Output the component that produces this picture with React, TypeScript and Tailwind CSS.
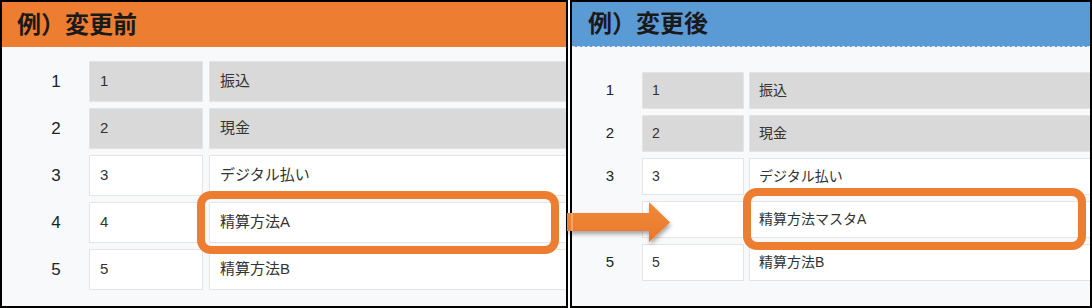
import React from 'react';

type Row = { no: number; code: string; name: string; disabled?: boolean };

const before: Row[] = [
  { no: 1, code: '1', name: '振込', disabled: true },
  { no: 2, code: '2', name: '現金', disabled: true },
  { no: 3, code: '3', name: 'デジタル払い' },
  { no: 4, code: '4', name: '精算方法A' },
  { no: 5, code: '5', name: '精算方法B' },
];

const after: Row[] = [
  { no: 1, code: '1', name: '振込', disabled: true },
  { no: 2, code: '2', name: '現金', disabled: true },
  { no: 3, code: '3', name: 'デジタル払い' },
  { no: 4, code: '4', name: '精算方法マスタA' },
  { no: 5, code: '5', name: '精算方法B' },
];

const font = { fontFamily: '"Liberation Sans", "Noto Sans CJK JP", sans-serif' };

const Cell: React.FC<{ text: string; disabled?: boolean; className: string }> = ({ text, disabled, className }) => (
  <div
    className={`flex shrink-0 items-center border text-[#333] ${
      disabled ? 'bg-[#d9d9d9] border-[#e4e4e4]' : 'bg-white border-[#e4e4e4]'
    } ${className}`}
  >
    {text}
  </div>
);

const Arrow: React.FC = () => (
  <svg width="110" height="52" viewBox="0 0 110 52" className="absolute left-[564px] top-[198px]">
    <defs>
      <linearGradient id="arrowFill" x1="0" y1="0" x2="0" y2="1">
        <stop offset="0" stopColor="#f08a3a" />
        <stop offset="1" stopColor="#e8782a" />
      </linearGradient>
      <filter id="arrowShadow" x="-10%" y="-20%" width="130%" height="160%">
        <feDropShadow dx="1" dy="3" stdDeviation="2" floodColor="#000" floodOpacity="0.35" />
      </filter>
    </defs>
    <path
      d="M3 15 H85 V4 L106 24.5 L85 44 V33 H3 Z"
      fill="url(#arrowFill)"
      filter="url(#arrowShadow)"
    />
    <rect x="7" y="15" width="2" height="18" fill="#f6b27e" opacity="0.7" />
  </svg>
);

export default function App() {
  return (
    <div className="relative flex h-[308px] w-[1092px] gap-[2px] overflow-hidden bg-white" style={font}>
      {/* before */}
      <div className="flex h-full w-[568px] shrink-0 flex-col overflow-hidden border-2 border-black bg-[#f8f9fb]">
        <div className="flex h-[45px] shrink-0 items-center bg-[#ed7d31] pl-[15px] text-[24px] font-bold text-[#1a1a1a]">
          例）変更前
        </div>
        <div className="flex flex-col gap-[6px] pt-[14px]">
          {before.map((r) => (
            <div key={r.no} className="flex h-[41px] items-center">
              <div className="ml-[37px] w-[34px] shrink-0 text-center text-[17px] text-[#222]">{r.no}</div>
              <Cell text={r.code} disabled={r.disabled} className="ml-[16px] h-full w-[114px] pl-[10px] text-[15px]" />
              <Cell text={r.name} disabled={r.disabled} className="ml-[6px] h-full w-[400px] pl-[10px] text-[15px]" />
            </div>
          ))}
        </div>
      </div>

      {/* after */}
      <div className="flex h-full min-w-0 flex-1 flex-col overflow-hidden border-2 border-black bg-[#f8f9fb]">
        <div className="flex h-[45px] shrink-0 items-center border-b border-dashed border-[#d6e0ee] bg-[#5b9bd5] pl-[16px] text-[24px] font-bold text-[#1a1a1a]">
          例）変更後
        </div>
        <div className="flex flex-col gap-[6px] pt-[25px]">
          {after.map((r) => (
            <div key={r.no} className="flex h-[37px] items-center">
              <div className="ml-[22px] w-[32px] shrink-0 text-center text-[15px] text-[#222]">{r.no}</div>
              <Cell text={r.code} disabled={r.disabled} className="ml-[16px] h-full w-[102px] pl-[9px] text-[14px]" />
              <Cell text={r.name} disabled={r.disabled} className="ml-[5px] h-full w-[360px] pl-[9px] text-[14px]" />
            </div>
          ))}
        </div>
      </div>

      {/* highlight boxes */}
      <div className="pointer-events-none absolute left-[197px] top-[191px] h-[63px] w-[362px] rounded-[14px] border-[8px] border-[#ed7d31]" />
      <div className="pointer-events-none absolute left-[743px] top-[188px] h-[62px] w-[343px] rounded-[14px] border-[8px] border-[#ed7d31]" />

      <Arrow />
    </div>
  );
}
